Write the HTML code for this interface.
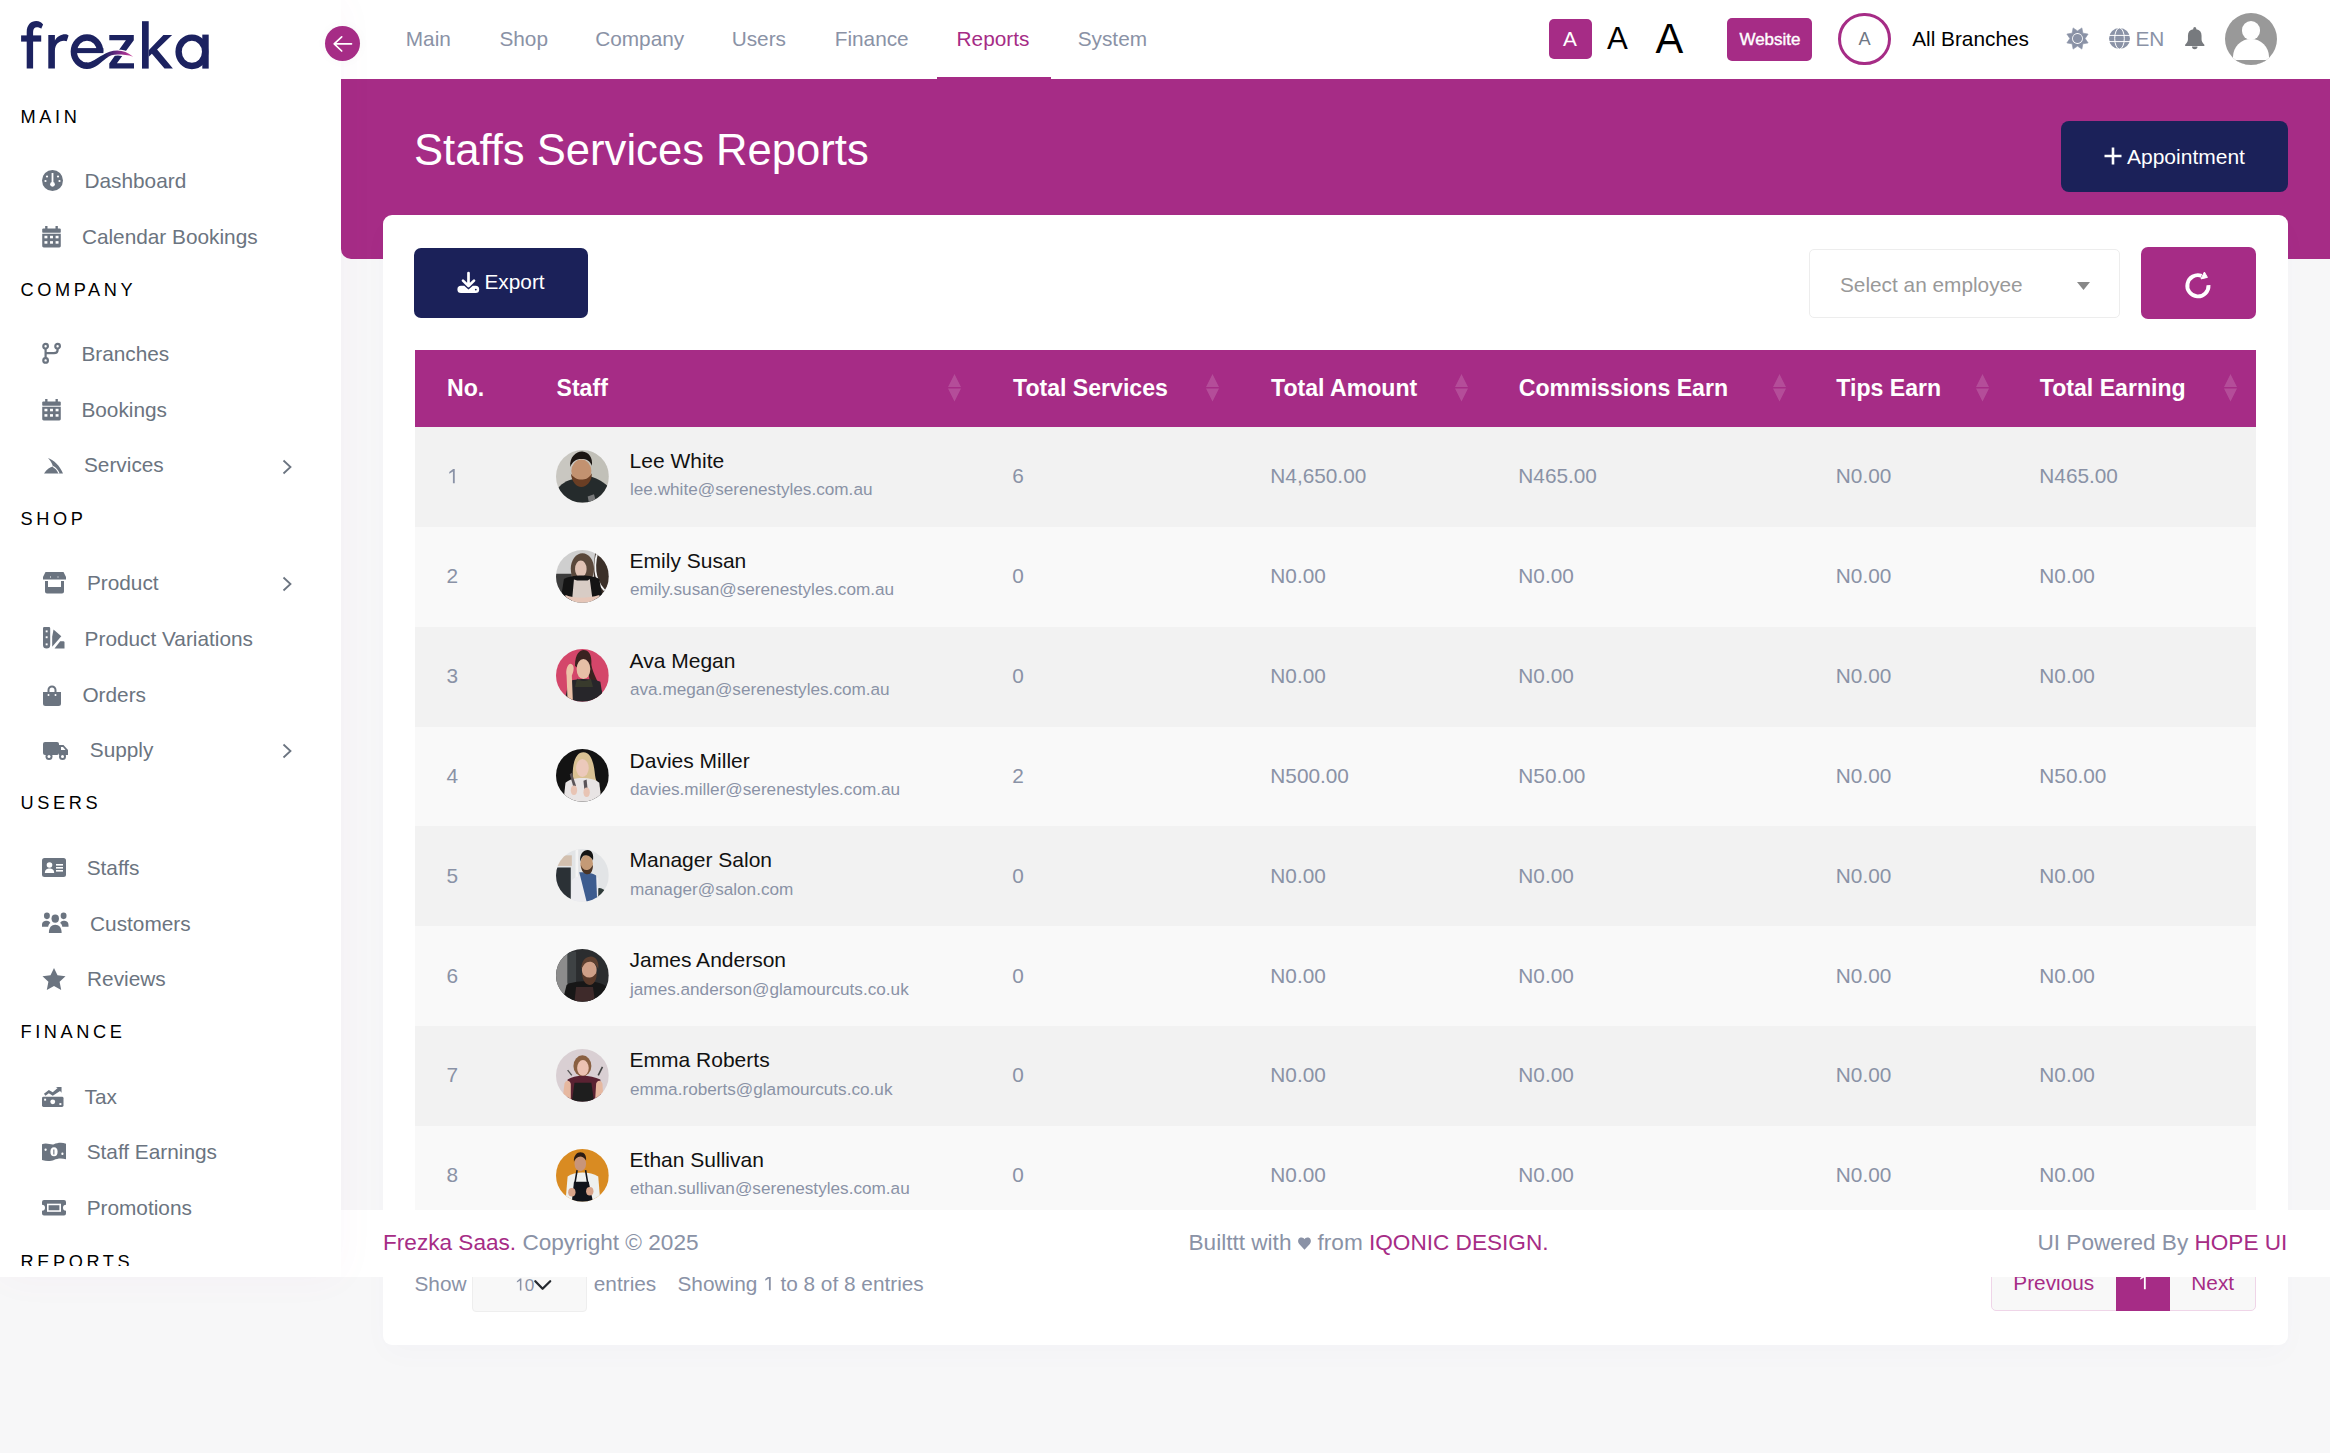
<!DOCTYPE html><html><head><meta charset="utf-8"><title>Staffs Services Reports</title><style>
*{box-sizing:border-box;margin:0;padding:0}
html,body{width:2330px;height:1453px;overflow:hidden}
body{background:#f7f7f8;font-family:"Liberation Sans",sans-serif;position:relative;color:#8a92a6}
.abs{position:absolute}
.t{position:absolute;white-space:nowrap;line-height:1}
svg{position:absolute;overflow:visible}
</style></head><body>
<div class="abs" style="left:341px;top:79px;width:1989px;height:179.6px;background:#a62c86;border-bottom-left-radius:10px"></div>
<div class="t " style="left:414.00px;top:128.99px;font-size:43.6px;color:#fff;">Staffs Services Reports</div>
<div class="abs" style="left:2061px;top:121px;width:227px;height:71px;background:#1b2159;border-radius:8px"></div>
<svg style="left:2104px;top:147px" width="18" height="18" viewBox="0 0 18 18"><path d="M9 0.5 V17.5 M0.5 9 H17.5" stroke="#fff" stroke-width="2.6"/></svg>
<div class="t " style="left:2127.00px;top:146.02px;font-size:21px;color:#fff;">Appointment</div>
<div class="abs" style="left:383px;top:215px;width:1905px;height:1130px;background:#fff;border-radius:9px;box-shadow:0 10px 30px rgba(17,38,146,0.02)"></div>
<div class="abs" style="left:414px;top:248px;width:174px;height:70px;background:#1b2159;border-radius:7px"></div>
<svg style="left:456.7px;top:271px" width="23" height="23" viewBox="0 0 23 23">
<path d="M0.4 18.4 a3.6 3.6 0 0 1 3.6 -3.6 H7.2 L11.5 18.6 L15.8 14.8 H18.6 a3.6 3.6 0 0 1 3.6 3.6 V18.5 a3.6 3.6 0 0 1 -3.6 3.6 H4 a3.6 3.6 0 0 1 -3.6 -3.6z" fill="#fff"/>
<path d="M11.5 2 V14.5 M6 9.6 L11.5 15 L17 9.6" stroke="#fff" stroke-width="2.7" fill="none" stroke-linecap="round" stroke-linejoin="round"/>
<circle cx="18.8" cy="18.6" r="0.9" fill="#1b2159"/>
</svg>
<div class="t " style="left:484.50px;top:272.39px;font-size:20.8px;color:#fff;">Export</div>
<div class="abs" style="left:1808.5px;top:248.5px;width:311px;height:69px;background:#fff;border:1.3px solid #ededed;border-radius:5px"></div>
<div class="t " style="left:1840.00px;top:275.09px;font-size:20.8px;color:#999;">Select an employee</div>
<svg style="left:2077px;top:282px" width="13" height="8" viewBox="0 0 13 8"><path d="M0 0 H13 L6.5 8z" fill="#888"/></svg>
<div class="abs" style="left:2141px;top:247px;width:115px;height:71.5px;background:#a62c86;border-radius:7px"></div>
<svg style="left:2184px;top:271px" width="28" height="28" viewBox="0 0 28 28">
<path d="M24.5 14.1 A10.6 10.6 0 1 1 17.5 4.8" stroke="#fff" stroke-width="3.9" fill="none"/>
<path d="M20.4 1 L23.4 6.4 L17 7.9 Z" fill="#fff" stroke="#fff" stroke-width="1" stroke-linejoin="round"/>
</svg>
<div class="abs" style="left:415px;top:350px;width:1840.5px;height:77px;background:#a62c86"></div>
<div class="t " style="left:447.00px;top:376.75px;font-size:23.1px;color:#fff;font-weight:bold;">No.</div>
<div class="t " style="left:556.50px;top:376.75px;font-size:23.1px;color:#fff;font-weight:bold;">Staff</div>
<svg style="left:948.0px;top:374px" width="13" height="28" viewBox="0 0 13 28"><path d="M6.5 0 L13 13 H0z M0 14.5 H13 L6.5 27.5z" fill="rgba(255,255,255,0.16)"/></svg>
<div class="t " style="left:1013.00px;top:376.75px;font-size:23.1px;color:#fff;font-weight:bold;">Total Services</div>
<svg style="left:1206.3px;top:374px" width="13" height="28" viewBox="0 0 13 28"><path d="M6.5 0 L13 13 H0z M0 14.5 H13 L6.5 27.5z" fill="rgba(255,255,255,0.16)"/></svg>
<div class="t " style="left:1271.00px;top:376.75px;font-size:23.1px;color:#fff;font-weight:bold;">Total Amount</div>
<svg style="left:1454.8px;top:374px" width="13" height="28" viewBox="0 0 13 28"><path d="M6.5 0 L13 13 H0z M0 14.5 H13 L6.5 27.5z" fill="rgba(255,255,255,0.16)"/></svg>
<div class="t " style="left:1518.80px;top:376.75px;font-size:23.1px;color:#fff;font-weight:bold;">Commissions Earn</div>
<svg style="left:1772.5px;top:374px" width="13" height="28" viewBox="0 0 13 28"><path d="M6.5 0 L13 13 H0z M0 14.5 H13 L6.5 27.5z" fill="rgba(255,255,255,0.16)"/></svg>
<div class="t " style="left:1836.30px;top:376.75px;font-size:23.1px;color:#fff;font-weight:bold;">Tips Earn</div>
<svg style="left:1975.5px;top:374px" width="13" height="28" viewBox="0 0 13 28"><path d="M6.5 0 L13 13 H0z M0 14.5 H13 L6.5 27.5z" fill="rgba(255,255,255,0.16)"/></svg>
<div class="t " style="left:2039.80px;top:376.75px;font-size:23.1px;color:#fff;font-weight:bold;">Total Earning</div>
<svg style="left:2223.5px;top:374px" width="13" height="28" viewBox="0 0 13 28"><path d="M6.5 0 L13 13 H0z M0 14.5 H13 L6.5 27.5z" fill="rgba(255,255,255,0.16)"/></svg>
<div class="abs" style="left:415px;top:427.00px;width:1840.5px;height:100.35px;background:#f2f2f2"></div>
<div class="t " style="left:446.50px;top:466.32px;font-size:20.8px;color:#8a92a6;"><svg style="position:static;display:inline;width:0.5561em;height:0.78125em;vertical-align:baseline;overflow:visible" viewBox="0 -1600 1139 1600"><path transform="scale(1,-1)" d="M583 0 V1160 L223 940 V1100 L600 1409 H763 V0 Z" fill="currentColor"/></svg></div>
<svg style="left:556.2px;top:449.73px" width="52.8" height="52.8" viewBox="0 0 100 100"><defs><clipPath id="cp0"><circle cx="50" cy="50" r="50"/></clipPath></defs><g clip-path="url(#cp0)"><rect width="100" height="100" fill="#c9c7c1"/><rect x="60" width="40" height="100" fill="#bdbab2" opacity="0.6"/><path d="M0 78 C8 64 22 57 34 55 L66 50 C80 54 92 62 100 70 V100 H0Z" fill="#252b2c"/><ellipse cx="48" cy="40" rx="19" ry="22" fill="#c39270"/><path d="M28 44 C30 62 40 70 48 70 C58 70 68 60 68 44 C62 54 56 56 48 56 C40 56 32 52 28 44Z" fill="#6a3e24"/><path d="M27 32 C25 12 40 2 50 3 C62 4 70 14 68 30 C64 20 58 17 48 17 C38 17 31 22 27 32Z" fill="#1b1512"/><path d="M60 88 L72 84 L75 95 L62 98Z" fill="#9a9a9a" opacity="0.7"/></g></svg>
<div class="t " style="left:629.60px;top:449.95px;font-size:21px;color:#111;">Lee White</div>
<div class="t " style="left:630.00px;top:481.40px;font-size:17.16px;color:#8a92a6;">lee.white@serenestyles.com.au</div>
<div class="t " style="left:1012.20px;top:466.32px;font-size:20.8px;color:#8a92a6;">6</div>
<div class="t " style="left:1270.30px;top:466.32px;font-size:20.8px;color:#8a92a6;">N4,650.00</div>
<div class="t " style="left:1518.30px;top:466.32px;font-size:20.8px;color:#8a92a6;">N465.00</div>
<div class="t " style="left:1835.80px;top:466.32px;font-size:20.8px;color:#8a92a6;">N0.00</div>
<div class="t " style="left:2039.30px;top:466.32px;font-size:20.8px;color:#8a92a6;">N465.00</div>
<div class="abs" style="left:415px;top:526.85px;width:1840.5px;height:100.35px;background:#f9f9f9"></div>
<div class="t " style="left:446.50px;top:566.17px;font-size:20.8px;color:#8a92a6;">2</div>
<svg style="left:556.2px;top:549.58px" width="52.8" height="52.8" viewBox="0 0 100 100"><defs><clipPath id="cp1"><circle cx="50" cy="50" r="50"/></clipPath></defs><g clip-path="url(#cp1)"><rect width="100" height="100" fill="#cfcfcf"/><rect x="0" y="45" width="30" height="55" fill="#3c3c3c"/><path d="M75 0 H100 V100 H80 C70 70 70 30 75 0Z" fill="#3b3029"/><path d="M78 5 C70 35 74 62 98 82" stroke="#f4f4f4" stroke-width="3.5" fill="none"/><ellipse cx="50" cy="36" rx="22" ry="30" fill="#5a483b"/><ellipse cx="47" cy="36" rx="11" ry="16" fill="#e0c2b4"/><path d="M8 100 L15 55 C28 46 70 46 82 55 L90 100Z" fill="#141414"/><path d="M30 100 L34 56 L40 58 H60 L64 55 L70 100Z" fill="#d8ccc5"/><path d="M18 85 C35 92 60 92 82 85 L84 100 H16Z" fill="#e6c6b8"/></g></svg>
<div class="t " style="left:629.60px;top:549.80px;font-size:21px;color:#111;">Emily Susan</div>
<div class="t " style="left:630.00px;top:581.25px;font-size:17.16px;color:#8a92a6;">emily.susan@serenestyles.com.au</div>
<div class="t " style="left:1012.20px;top:566.17px;font-size:20.8px;color:#8a92a6;">0</div>
<div class="t " style="left:1270.30px;top:566.17px;font-size:20.8px;color:#8a92a6;">N0.00</div>
<div class="t " style="left:1518.30px;top:566.17px;font-size:20.8px;color:#8a92a6;">N0.00</div>
<div class="t " style="left:1835.80px;top:566.17px;font-size:20.8px;color:#8a92a6;">N0.00</div>
<div class="t " style="left:2039.30px;top:566.17px;font-size:20.8px;color:#8a92a6;">N0.00</div>
<div class="abs" style="left:415px;top:626.70px;width:1840.5px;height:100.35px;background:#f2f2f2"></div>
<div class="t " style="left:446.50px;top:666.02px;font-size:20.8px;color:#8a92a6;">3</div>
<svg style="left:556.2px;top:649.43px" width="52.8" height="52.8" viewBox="0 0 100 100"><defs><clipPath id="cp2"><circle cx="50" cy="50" r="50"/></clipPath></defs><g clip-path="url(#cp2)"><rect width="100" height="100" fill="#d4466a"/><path d="M36 32 C36 8 46 2 52 2 C62 2 68 10 67 30 C70 48 80 60 90 90 L68 95 C66 70 64 60 62 50Z" fill="#3a2220"/><ellipse cx="52" cy="38" rx="13" ry="19" fill="#e6bfa6"/><path d="M16 100 L24 62 C36 55 68 55 84 62 L90 100Z" fill="#27262a"/><path d="M40 56 C45 62 60 62 66 56 L70 72 H36Z" fill="#383a2c"/><path d="M22 100 L20 50 C18 40 22 28 28 28 C36 30 34 42 30 50 L32 100Z" fill="#ecc2a8"/></g></svg>
<div class="t " style="left:629.60px;top:649.65px;font-size:21px;color:#111;">Ava Megan</div>
<div class="t " style="left:630.00px;top:681.10px;font-size:17.16px;color:#8a92a6;">ava.megan@serenestyles.com.au</div>
<div class="t " style="left:1012.20px;top:666.02px;font-size:20.8px;color:#8a92a6;">0</div>
<div class="t " style="left:1270.30px;top:666.02px;font-size:20.8px;color:#8a92a6;">N0.00</div>
<div class="t " style="left:1518.30px;top:666.02px;font-size:20.8px;color:#8a92a6;">N0.00</div>
<div class="t " style="left:1835.80px;top:666.02px;font-size:20.8px;color:#8a92a6;">N0.00</div>
<div class="t " style="left:2039.30px;top:666.02px;font-size:20.8px;color:#8a92a6;">N0.00</div>
<div class="abs" style="left:415px;top:726.55px;width:1840.5px;height:100.35px;background:#f9f9f9"></div>
<div class="t " style="left:446.50px;top:765.87px;font-size:20.8px;color:#8a92a6;">4</div>
<svg style="left:556.2px;top:749.27px" width="52.8" height="52.8" viewBox="0 0 100 100"><defs><clipPath id="cp3"><circle cx="50" cy="50" r="50"/></clipPath></defs><g clip-path="url(#cp3)"><rect width="100" height="100" fill="#131313"/><path d="M32 60 C30 30 36 6 52 6 C68 6 72 30 74 50 C76 65 84 70 84 82 L60 80 L40 75Z" fill="#d9c193"/><ellipse cx="50" cy="36" rx="12" ry="17" fill="#ecc9bb"/><path d="M14 100 L18 64 C30 52 70 52 82 64 L86 100Z" fill="#e8e4e4"/><path d="M26 48 L30 45 L38 70 L33 72Z" fill="#5a5458"/><path d="M52 60 L58 58 L60 78 L54 80Z" fill="#5a5458"/><ellipse cx="34" cy="78" rx="6" ry="9" fill="#e8c4b4"/><ellipse cx="58" cy="82" rx="6" ry="9" fill="#e8c4b4"/></g></svg>
<div class="t " style="left:629.60px;top:749.50px;font-size:21px;color:#111;">Davies Miller</div>
<div class="t " style="left:630.00px;top:780.95px;font-size:17.16px;color:#8a92a6;">davies.miller@serenestyles.com.au</div>
<div class="t " style="left:1012.20px;top:765.87px;font-size:20.8px;color:#8a92a6;">2</div>
<div class="t " style="left:1270.30px;top:765.87px;font-size:20.8px;color:#8a92a6;">N500.00</div>
<div class="t " style="left:1518.30px;top:765.87px;font-size:20.8px;color:#8a92a6;">N50.00</div>
<div class="t " style="left:1835.80px;top:765.87px;font-size:20.8px;color:#8a92a6;">N0.00</div>
<div class="t " style="left:2039.30px;top:765.87px;font-size:20.8px;color:#8a92a6;">N50.00</div>
<div class="abs" style="left:415px;top:826.40px;width:1840.5px;height:100.35px;background:#f2f2f2"></div>
<div class="t " style="left:446.50px;top:865.72px;font-size:20.8px;color:#8a92a6;">5</div>
<svg style="left:556.2px;top:849.12px" width="52.8" height="52.8" viewBox="0 0 100 100"><defs><clipPath id="cp4"><circle cx="50" cy="50" r="50"/></clipPath></defs><g clip-path="url(#cp4)"><rect width="100" height="100" fill="#e2e4e6"/><rect x="0" y="35" width="28" height="65" fill="#2b3136"/><rect x="37" y="0" width="5" height="100" fill="#f4f4f4"/><rect x="0" y="12" width="30" height="20" fill="#c9a98a" opacity="0.6"/><path d="M78 75 C85 72 92 76 95 85 L90 100 H76Z" fill="#2f3b3a"/><path d="M28 100 L30 60 C36 48 70 46 80 55 L80 100Z" fill="#ececf0"/><path d="M44 44 L58 100 H78 L76 50 C70 46 60 44 44 44Z" fill="#3d5c8f"/><ellipse cx="58" cy="28" rx="12" ry="17" fill="#c49a76"/><path d="M47 30 C48 44 54 48 60 48 C66 48 70 42 70 30 C66 38 62 40 58 40 C52 40 49 36 47 30Z" fill="#4a3426"/><path d="M46 24 C44 10 52 2 60 2 C68 2 72 10 70 22 C66 14 60 12 56 12 C50 12 48 18 46 24Z" fill="#151515"/></g></svg>
<div class="t " style="left:629.60px;top:849.35px;font-size:21px;color:#111;">Manager Salon</div>
<div class="t " style="left:630.00px;top:880.80px;font-size:17.16px;color:#8a92a6;">manager@salon.com</div>
<div class="t " style="left:1012.20px;top:865.72px;font-size:20.8px;color:#8a92a6;">0</div>
<div class="t " style="left:1270.30px;top:865.72px;font-size:20.8px;color:#8a92a6;">N0.00</div>
<div class="t " style="left:1518.30px;top:865.72px;font-size:20.8px;color:#8a92a6;">N0.00</div>
<div class="t " style="left:1835.80px;top:865.72px;font-size:20.8px;color:#8a92a6;">N0.00</div>
<div class="t " style="left:2039.30px;top:865.72px;font-size:20.8px;color:#8a92a6;">N0.00</div>
<div class="abs" style="left:415px;top:926.25px;width:1840.5px;height:100.35px;background:#f9f9f9"></div>
<div class="t " style="left:446.50px;top:965.57px;font-size:20.8px;color:#8a92a6;">6</div>
<svg style="left:556.2px;top:948.98px" width="52.8" height="52.8" viewBox="0 0 100 100"><defs><clipPath id="cp5"><circle cx="50" cy="50" r="50"/></clipPath></defs><g clip-path="url(#cp5)"><rect width="100" height="100" fill="#2b2d2f"/><rect x="0" y="0" width="22" height="100" fill="#8c8c8c"/><rect x="22" y="5" width="16" height="60" fill="#3e4244"/><path d="M12 100 L20 68 C35 58 85 58 96 72 L100 100Z" fill="#171717"/><path d="M35 100 L38 72 H70 L74 100Z" fill="#3e2a2a"/><ellipse cx="63" cy="40" rx="14" ry="18" fill="#cfa088"/><path d="M49 44 C50 62 58 68 64 68 C72 68 78 58 77 44 C72 52 68 54 63 54 C56 54 52 50 49 44Z" fill="#5a3a2a"/><path d="M48 38 C48 20 58 14 66 14 C76 14 82 24 80 38 C76 28 70 24 64 24 C56 24 52 30 48 38Z" fill="#5e4030"/></g></svg>
<div class="t " style="left:629.60px;top:949.20px;font-size:21px;color:#111;">James Anderson</div>
<div class="t " style="left:630.00px;top:980.65px;font-size:17.16px;color:#8a92a6;">james.anderson@glamourcuts.co.uk</div>
<div class="t " style="left:1012.20px;top:965.57px;font-size:20.8px;color:#8a92a6;">0</div>
<div class="t " style="left:1270.30px;top:965.57px;font-size:20.8px;color:#8a92a6;">N0.00</div>
<div class="t " style="left:1518.30px;top:965.57px;font-size:20.8px;color:#8a92a6;">N0.00</div>
<div class="t " style="left:1835.80px;top:965.57px;font-size:20.8px;color:#8a92a6;">N0.00</div>
<div class="t " style="left:2039.30px;top:965.57px;font-size:20.8px;color:#8a92a6;">N0.00</div>
<div class="abs" style="left:415px;top:1026.10px;width:1840.5px;height:100.35px;background:#f2f2f2"></div>
<div class="t " style="left:446.50px;top:1065.42px;font-size:20.8px;color:#8a92a6;">7</div>
<svg style="left:556.2px;top:1048.82px" width="52.8" height="52.8" viewBox="0 0 100 100"><defs><clipPath id="cp6"><circle cx="50" cy="50" r="50"/></clipPath></defs><g clip-path="url(#cp6)"><rect width="100" height="100" fill="#d9cfd3"/><ellipse cx="50" cy="32" rx="17" ry="20" fill="#8a6042"/><ellipse cx="51" cy="36" rx="11" ry="15" fill="#ecc2b2"/><path d="M20 100 L22 58 C35 48 65 48 84 58 L86 100Z" fill="#5a2232"/><path d="M30 100 L35 64 H67 L72 100Z" fill="#1e1e1e"/><path d="M12 100 L16 66 C18 58 26 58 28 66 L28 100Z" fill="#e6b8a0"/><path d="M74 100 L76 66 C78 58 86 58 88 66 L90 100Z" fill="#e6b8a0"/><path d="M22 40 L30 50" stroke="#555" stroke-width="2.5"/><path d="M88 34 L80 50" stroke="#444" stroke-width="3"/></g></svg>
<div class="t " style="left:629.60px;top:1049.05px;font-size:21px;color:#111;">Emma Roberts</div>
<div class="t " style="left:630.00px;top:1080.50px;font-size:17.16px;color:#8a92a6;">emma.roberts@glamourcuts.co.uk</div>
<div class="t " style="left:1012.20px;top:1065.42px;font-size:20.8px;color:#8a92a6;">0</div>
<div class="t " style="left:1270.30px;top:1065.42px;font-size:20.8px;color:#8a92a6;">N0.00</div>
<div class="t " style="left:1518.30px;top:1065.42px;font-size:20.8px;color:#8a92a6;">N0.00</div>
<div class="t " style="left:1835.80px;top:1065.42px;font-size:20.8px;color:#8a92a6;">N0.00</div>
<div class="t " style="left:2039.30px;top:1065.42px;font-size:20.8px;color:#8a92a6;">N0.00</div>
<div class="abs" style="left:415px;top:1125.95px;width:1840.5px;height:100.35px;background:#f9f9f9"></div>
<div class="t " style="left:446.50px;top:1165.27px;font-size:20.8px;color:#8a92a6;">8</div>
<svg style="left:556.2px;top:1148.67px" width="52.8" height="52.8" viewBox="0 0 100 100"><defs><clipPath id="cp7"><circle cx="50" cy="50" r="50"/></clipPath></defs><g clip-path="url(#cp7)"><rect width="100" height="100" fill="#d98b22"/><path d="M18 100 L22 52 C35 42 65 42 80 52 L84 100Z" fill="#eef0ee"/><path d="M30 100 L34 62 H62 L70 100Z" fill="#10131a"/><path d="M36 64 L40 40 M60 64 L56 40" stroke="#10131a" stroke-width="3"/><ellipse cx="46" cy="28" rx="11" ry="14" fill="#c8957a"/><path d="M34 24 C33 12 40 6 46 6 C54 6 58 12 57 22 C54 16 50 14 46 14 C40 14 37 18 34 24Z" fill="#2c1c15"/><ellipse cx="30" cy="82" rx="7" ry="8" fill="#d8a48a"/><ellipse cx="64" cy="80" rx="7" ry="8" fill="#d8a48a"/></g></svg>
<div class="t " style="left:629.60px;top:1148.90px;font-size:21px;color:#111;">Ethan Sullivan</div>
<div class="t " style="left:630.00px;top:1180.35px;font-size:17.16px;color:#8a92a6;">ethan.sullivan@serenestyles.com.au</div>
<div class="t " style="left:1012.20px;top:1165.27px;font-size:20.8px;color:#8a92a6;">0</div>
<div class="t " style="left:1270.30px;top:1165.27px;font-size:20.8px;color:#8a92a6;">N0.00</div>
<div class="t " style="left:1518.30px;top:1165.27px;font-size:20.8px;color:#8a92a6;">N0.00</div>
<div class="t " style="left:1835.80px;top:1165.27px;font-size:20.8px;color:#8a92a6;">N0.00</div>
<div class="t " style="left:2039.30px;top:1165.27px;font-size:20.8px;color:#8a92a6;">N0.00</div>
<div class="t " style="left:414.50px;top:1273.69px;font-size:20.8px;color:#8a92a6;">Show</div>
<div class="abs" style="left:472px;top:1250px;width:115px;height:62px;background:#f8f8f8;border:1px solid #eee;border-radius:4px"></div>
<div class="t " style="left:515.30px;top:1276.64px;font-size:17.2px;color:#8a92a6;"><svg style="position:static;display:inline;width:0.5561em;height:0.78125em;vertical-align:baseline;overflow:visible" viewBox="0 -1600 1139 1600"><path transform="scale(1,-1)" d="M583 0 V1160 L223 940 V1100 L600 1409 H763 V0 Z" fill="currentColor"/></svg>0</div>
<svg style="left:533.5px;top:1280.2px" width="17.5" height="11" viewBox="0 0 17.5 11"><path d="M1.3 1.3 L8.6 8.8 L16.2 1.3" stroke="#252a30" stroke-width="2.3" fill="none" stroke-linecap="round" stroke-linejoin="round"/></svg>
<div class="t " style="left:593.80px;top:1273.69px;font-size:20.8px;color:#8a92a6;">entries</div>
<div class="t " style="left:677.50px;top:1273.69px;font-size:20.8px;color:#8a92a6;">Showing <svg style="position:static;display:inline;width:0.5561em;height:0.78125em;vertical-align:baseline;overflow:visible" viewBox="0 -1600 1139 1600"><path transform="scale(1,-1)" d="M583 0 V1160 L223 940 V1100 L600 1409 H763 V0 Z" fill="currentColor"/></svg> to 8 of 8 entries</div>
<div class="abs" style="left:1991px;top:1250px;width:265px;height:60.5px;background:#f8f8f8;border:1.3px solid #efd5e8;border-radius:5px"></div>
<div class="abs" style="left:2115.5px;top:1250px;width:54px;height:61px;background:#a62c86"></div>
<div class="t " style="left:2013.30px;top:1272.59px;font-size:20.8px;color:#a62c86;">Previous</div>
<div class="t " style="left:2138.00px;top:1272.59px;font-size:20.8px;color:#fff;"><svg style="position:static;display:inline;width:0.5561em;height:0.78125em;vertical-align:baseline;overflow:visible" viewBox="0 -1600 1139 1600"><path transform="scale(1,-1)" d="M583 0 V1160 L223 940 V1100 L600 1409 H763 V0 Z" fill="currentColor"/></svg></div>
<div class="t " style="left:2191.30px;top:1272.59px;font-size:20.8px;color:#a62c86;">Next</div>
<div class="abs" style="left:341px;top:1209.5px;width:1989px;height:67.5px;background:#fff"></div>
<div class="t " style="left:383.00px;top:1232.27px;font-size:22.6px;color:#8a92a6;"><span style="color:#a62c86">Frezka Saas.</span> Copyright © 2025</div>
<div class="t " style="left:1188.50px;top:1232.27px;font-size:22.6px;color:#8a92a6;">Builttt with <span style="display:inline-block;width:13.5px"></span> from <span style="color:#a62c86">IQONIC DESIGN.</span></div>
<svg style="left:1297.9px;top:1237.3px" width="13" height="13" viewBox="0 0 13 13"><path d="M6.5 12.8 L1.2 7 C-0.6 5 -0.2 1.5 2.5 0.6 C4.3 0 5.8 0.9 6.5 2.2 C7.2 0.9 8.7 0 10.5 0.6 C13.2 1.5 13.6 5 11.8 7 Z" fill="#8a92a6"/></svg>
<div class="t " style="left:2037.50px;top:1232.27px;font-size:22.6px;color:#8a92a6;">UI Powered By <span style="color:#a62c86">HOPE UI</span></div>
<div class="abs" style="left:0;top:0;width:2330px;height:79px;background:#fff"></div>
<div class="t " style="left:405.80px;top:29.29px;font-size:20.8px;color:#8a92a6;">Main</div>
<div class="t " style="left:499.40px;top:29.29px;font-size:20.8px;color:#8a92a6;">Shop</div>
<div class="t " style="left:595.20px;top:29.29px;font-size:20.8px;color:#8a92a6;">Company</div>
<div class="t " style="left:731.70px;top:29.29px;font-size:20.8px;color:#8a92a6;">Users</div>
<div class="t " style="left:834.70px;top:29.29px;font-size:20.8px;color:#8a92a6;">Finance</div>
<div class="t " style="left:956.60px;top:29.29px;font-size:20.8px;color:#a62c86;">Reports</div>
<div class="t " style="left:1077.70px;top:29.29px;font-size:20.8px;color:#8a92a6;">System</div>
<div class="abs" style="left:937px;top:76.5px;width:114px;height:2.5px;background:#a62c86"></div>
<div class="abs" style="left:1549px;top:19px;width:42.5px;height:40px;background:#a62c86;border-radius:5px"></div>
<div class="t " style="left:1563.00px;top:28.79px;font-size:20.8px;color:#fff;">A</div>
<div class="t " style="left:1607.00px;top:23.39px;font-size:31.2px;color:#000;">A</div>
<div class="t " style="left:1655.50px;top:18.49px;font-size:41.6px;color:#000;">A</div>
<div class="abs" style="left:1727.3px;top:17.7px;width:85px;height:43px;background:#a62c86;border-radius:5px"></div>
<div class="t " style="left:1739.40px;top:30.91px;font-size:17px;color:#fff;-webkit-text-stroke:0.4px #fff;">Website</div>
<div class="abs" style="left:1838.2px;top:12.6px;width:52.6px;height:52.6px;border:3px solid #a62c86;border-radius:50%"></div>
<div class="t " style="left:1858.40px;top:29.89px;font-size:18.2px;color:#6f7785;">A</div>
<div class="t " style="left:1912.20px;top:28.59px;font-size:20.8px;color:#000;">All Branches</div>
<svg style="left:2066px;top:26.85px" width="23" height="23" viewBox="0 0 23 23">
<path d="M15.90 0.88 L16.87 6.13 L22.12 7.10 L19.10 11.50 L22.12 15.90 L16.87 16.87 L15.90 22.12 L11.50 19.10 L7.10 22.12 L6.13 16.87 L0.88 15.90 L3.90 11.50 L0.88 7.10 L6.13 6.13 L7.10 0.88 L11.50 3.90Z" fill="#8a92a6" stroke="#8a92a6" stroke-width="0.6" stroke-linejoin="round"/>
<circle cx="11.5" cy="11.5" r="5.4" fill="#fff"/><circle cx="11.5" cy="11.5" r="4.6" fill="#8a92a6"/>
</svg>
<svg style="left:2109.1px;top:27.85px" width="21" height="21" viewBox="0 0 21 21">
<circle cx="10.5" cy="10.5" r="10.5" fill="#8a92a6"/>
<g stroke="#fff" stroke-width="1" fill="none"><ellipse cx="10.5" cy="10.5" rx="4.8" ry="10.6"/><path d="M0 7.4 H21 M0 13.6 H21"/></g>
</svg>
<div class="t " style="left:2135.50px;top:28.59px;font-size:20.8px;color:#8a92a6;">EN</div>
<svg style="left:2185px;top:27.3px" width="19.5" height="22" viewBox="0 0 19.5 22">
<path d="M9.75 0 a1.5 1.5 0 0 1 1.5 1.5 v0.8 a6.5 6.5 0 0 1 5.3 6.4 v3.6 c0 2.2 1 3.6 2.6 5.1 a0.9 0.9 0 0 1 -0.6 1.6 h-17.6 a0.9 0.9 0 0 1 -0.6 -1.6 c1.6 -1.5 2.6 -2.9 2.6 -5.1 v-3.6 a6.5 6.5 0 0 1 5.3 -6.4 v-0.8 a1.5 1.5 0 0 1 1.5 -1.5z M7 19.5 h5.5 a2.75 2.75 0 0 1 -5.5 0z" fill="#777a7e"/>
</svg>
<div class="abs" style="left:2224.5px;top:12.7px;width:52.8px;height:52.8px;border-radius:50%;background:#999;overflow:hidden">
<div class="abs" style="left:17.3px;top:8.8px;width:18.4px;height:18.4px;border-radius:50%;background:#fff"></div>
<div class="abs" style="left:8.6px;top:26.6px;width:35.6px;height:32px;border-radius:17.8px 17.8px 0 0;background:#fff"></div>
<div class="abs" style="left:0;top:47.5px;width:53px;height:6px;background:#999"></div>
</div>
<div class="abs" style="left:0;top:0;width:341px;height:1277px;background:#fff;box-shadow:0 0 40px rgba(166,44,134,0.035)"></div>
<div class="abs" style="left:325.3px;top:25.9px;width:35.1px;height:35px;border-radius:50%;background:#a62c86;box-shadow:0 0 12px rgba(0,0,0,0.03)"></div>
<svg style="left:325px;top:26px" width="36" height="36" viewBox="325 26 36 36"><path d="M341.7 36.9 L334.2 43.8 L341.7 51 M334.6 43.8 H351.5" stroke="#fff" stroke-width="1.7" fill="none" stroke-linecap="round" stroke-linejoin="round"/></svg>
<svg style="left:0;top:0" width="230" height="90" viewBox="0 0 230 90">
<defs><linearGradient id="sw" gradientUnits="userSpaceOnUse" x1="95" y1="0" x2="134" y2="0"><stop offset="0" stop-color="#1c2260"/><stop offset="0.25" stop-color="#1c2260"/><stop offset="0.55" stop-color="#6a2a82"/><stop offset="0.8" stop-color="#a83291"/><stop offset="1" stop-color="#d65aa8"/></linearGradient></defs>
<g fill="#1c2260">
<path d="M26.7 68.4 V32 C26.7 25 31 21.1 36.2 21.1 C39.5 21.1 41.5 22.5 43.1 24.4 L41.2 28.8 C40 27.8 38.6 27.3 36.9 27.3 C34.5 27.3 33.1 29 33.1 32 V68.4 Z"/>
<rect x="21.1" y="35.4" width="20.1" height="6.2"/>
<path d="M48.3 35 H54.9 V40.4 C57 36.5 61 34.2 65.1 34.2 C66.5 34.2 67.6 34.7 68.6 35.4 L66.7 41.2 C66 41 65 40.8 64 40.8 C58.5 40.8 54.9 45 54.9 51 V68.4 H48.3 Z"/>
<path d="M109.3 35.1 H133.8 V40.3 L116.9 63.2 H134 V68.6 H109.3 V63.5 L125.9 40.3 H109.3 Z"/>
<rect x="142" y="21.2" width="6.7" height="47.4"/>
<path d="M148.7 50.3 L163.4 35.1 H172.1 L157.1 49.6 L172.9 68.6 H164.5 L151.9 53.7 L148.7 56.7 Z"/>
<rect x="202.3" y="34.6" width="6.4" height="34"/>
<rect x="77" y="48.1" width="26.4" height="5"/>
</g>
<g fill="none" stroke="#1c2260" stroke-width="6.4">
<path d="M100.15 51.6 A13.15 14.1 0 0 0 73.85 51.6 A13.15 14.1 0 0 0 87.5 65.8"/>
<ellipse cx="191.9" cy="51.8" rx="13.3" ry="14.2"/>
</g>
<path d="M106 56.5 C110 53 114 52.5 118 52.5 C123 52.5 127 54 131 56" stroke="#fff" stroke-width="6" fill="none"/>
<path d="M86 62.6 C92 62.6 97 58 102.4 55.2 C107 52.5 112 50.5 117.3 50.5 C123 50.5 128 52.5 133.2 56.8 C128 55 123 54.6 117.3 54.6 C113 54.6 110 55.5 106 58.5 C101 62 96 69 87 69 Z" fill="url(#sw)"/>
</svg>
<div class="t " style="left:20.50px;top:107.59px;font-size:18.2px;color:#000;letter-spacing:3.6px;">MAIN</div>
<div class="t " style="left:84.50px;top:170.99px;font-size:20.8px;color:#6b7480;">Dashboard</div>
<svg style="left:42px;top:170.00px" width="21" height="21" viewBox="0 0 21 21"><circle cx="10.5" cy="10.5" r="10.5" fill="#6b7480"/><g fill="#fff"><rect x="9.6" y="3" width="1.8" height="10"/><circle cx="10.5" cy="14.3" r="2.4"/><circle cx="5" cy="6.5" r="1.1"/><circle cx="16" cy="6.5" r="1.1"/><circle cx="3.5" cy="11" r="1.1"/><circle cx="17.5" cy="11" r="1.1"/></g></svg>
<div class="t " style="left:81.90px;top:226.99px;font-size:20.8px;color:#6b7480;">Calendar Bookings</div>
<svg style="left:42px;top:226.00px" width="19" height="21.5" viewBox="0 0 19 22"><g fill="#6b7480"><rect x="3" y="0" width="2.4" height="4"/><rect x="13.6" y="0" width="2.4" height="4"/><rect x="0" y="2.5" width="19" height="4.5" rx="1.2"/><path d="M0 8 H19 V20.5 a1.5 1.5 0 0 1 -1.5 1.5 H1.5 A1.5 1.5 0 0 1 0 20.5z"/></g><g fill="#fff"><rect x="2.3" y="10" width="3" height="2.6"/><rect x="8" y="10" width="3" height="2.6"/><rect x="13.7" y="10" width="3" height="2.6"/><rect x="2.3" y="15.5" width="3" height="2.6"/><rect x="8" y="15.5" width="3" height="2.6"/><rect x="13.7" y="15.5" width="3" height="2.6"/></g></svg>
<div class="t " style="left:20.50px;top:280.59px;font-size:18.2px;color:#000;letter-spacing:3.6px;">COMPANY</div>
<div class="t " style="left:81.40px;top:344.39px;font-size:20.8px;color:#6b7480;">Branches</div>
<svg style="left:42px;top:343.40px" width="19" height="21" viewBox="0 0 19 21"><g fill="none" stroke="#6b7480" stroke-width="2.2"><circle cx="3.6" cy="3.2" r="2.3"/><circle cx="15.6" cy="3.2" r="2.3"/><circle cx="3.6" cy="17.4" r="2.3"/><path d="M3.6 5.5 V15.1 M15.6 5.5 V7 C15.6 9 14 10.1 12 10.1 H3.6"/></g></svg>
<div class="t " style="left:81.40px;top:399.99px;font-size:20.8px;color:#6b7480;">Bookings</div>
<svg style="left:42px;top:399.00px" width="19" height="21.5" viewBox="0 0 19 22"><g fill="#6b7480"><rect x="3" y="0" width="2.4" height="4"/><rect x="13.6" y="0" width="2.4" height="4"/><rect x="0" y="2.5" width="19" height="4.5" rx="1.2"/><path d="M0 8 H19 V20.5 a1.5 1.5 0 0 1 -1.5 1.5 H1.5 A1.5 1.5 0 0 1 0 20.5z"/></g><g fill="#fff"><rect x="2.3" y="10" width="3" height="2.6"/><rect x="8" y="10" width="3" height="2.6"/><rect x="13.7" y="10" width="3" height="2.6"/><rect x="2.3" y="15.5" width="3" height="2.6"/><rect x="8" y="15.5" width="3" height="2.6"/><rect x="13.7" y="15.5" width="3" height="2.6"/></g></svg>
<div class="t " style="left:84.00px;top:455.39px;font-size:20.8px;color:#6b7480;">Services</div>
<svg style="left:43.5px;top:458.00px" width="19" height="16" viewBox="0 0 19 16"><path d="M4 0 C10 2 16 8 19 15.5 H0 C3 11 6 9 9 8.5 C8 5 6 2 4 0z" fill="#6b7480"/><path d="M9 8.5 C12 10 14 13 15 15.5" stroke="#fff" stroke-width="1.2" fill="none"/></svg>
<svg style="left:282px;top:458.50px" width="10" height="16" viewBox="0 0 10 16"><path d="M1.5 1.5 L8.5 8 L1.5 14.5" stroke="#6b7480" stroke-width="1.8" fill="none"/></svg>
<div class="t " style="left:20.50px;top:509.59px;font-size:18.2px;color:#000;letter-spacing:3.6px;">SHOP</div>
<div class="t " style="left:86.90px;top:573.09px;font-size:20.8px;color:#6b7480;">Product</div>
<svg style="left:42.5px;top:571.90px" width="23" height="21.5" viewBox="0 0 23 21.5"><g fill="#6b7480"><path d="M2.5 0 H20.5 L23 5 V7.5 H0 V5z"/><path d="M2 9 H5 V15 H18 V9 H21 V19.5 a2 2 0 0 1 -2 2 H4 a2 2 0 0 1 -2 -2z"/></g><g fill="#fff"><rect x="7" y="4.5" width="1" height="1"/><rect x="14.5" y="4.5" width="1" height="1"/></g></svg>
<svg style="left:282px;top:576.20px" width="10" height="16" viewBox="0 0 10 16"><path d="M1.5 1.5 L8.5 8 L1.5 14.5" stroke="#6b7480" stroke-width="1.8" fill="none"/></svg>
<div class="t " style="left:84.60px;top:628.99px;font-size:20.8px;color:#6b7480;">Product Variations</div>
<svg style="left:42.5px;top:627.10px" width="21.5" height="21.5" viewBox="0 0 21.5 21.5"><g fill="#6b7480"><path d="M0 1.2 a1.2 1.2 0 0 1 1.2 -1.2 H6 a1.2 1.2 0 0 1 1.2 1.2 V18 a3.6 3.6 0 0 1 -7.2 0z"/><path d="M10.5 2.6 L18.3 9.2 L9.2 19.8 V9.6z"/><path d="M11.5 21.5 L17.2 14.3 H20.3 a1.2 1.2 0 0 1 1.2 1.2 V21.5z"/></g><g fill="#fff"><rect x="2.7" y="3.4" width="1.9" height="1.9"/><rect x="2.7" y="9.3" width="1.9" height="1.9"/><rect x="2.7" y="16.4" width="1.9" height="1.9"/></g></svg>
<div class="t " style="left:82.40px;top:684.59px;font-size:20.8px;color:#6b7480;">Orders</div>
<svg style="left:42.5px;top:684.60px" width="18" height="21" viewBox="0 0 18 21"><path d="M5.5 7 V5 a3.5 3.5 0 0 1 7 0 V7" stroke="#6b7480" stroke-width="2" fill="none"/><path d="M0 7 H18 V18.5 a2.5 2.5 0 0 1 -2.5 2.5 H2.5 A2.5 2.5 0 0 1 0 18.5z" fill="#6b7480"/><circle cx="5.5" cy="10" r="1" fill="#fff"/><circle cx="12.5" cy="10" r="1" fill="#fff"/></svg>
<div class="t " style="left:89.80px;top:739.99px;font-size:20.8px;color:#6b7480;">Supply</div>
<svg style="left:42.5px;top:741.80px" width="26" height="18" viewBox="0 0 26 18"><g fill="#6b7480"><rect x="0" y="0" width="16" height="13" rx="2"/><path d="M16 3 H20.5 L25 8 V13 H16z"/><circle cx="6" cy="14.5" r="3.5"/><circle cx="19.5" cy="14.5" r="3.5"/></g><g fill="#fff"><circle cx="6" cy="14.5" r="1.5"/><circle cx="19.5" cy="14.5" r="1.5"/><path d="M18 5 H20 L22.5 8 H18z"/></g></svg>
<svg style="left:282px;top:743.10px" width="10" height="16" viewBox="0 0 10 16"><path d="M1.5 1.5 L8.5 8 L1.5 14.5" stroke="#6b7480" stroke-width="1.8" fill="none"/></svg>
<div class="t " style="left:20.50px;top:794.39px;font-size:18.2px;color:#000;letter-spacing:3.6px;">USERS</div>
<div class="t " style="left:86.70px;top:857.79px;font-size:20.8px;color:#6b7480;">Staffs</div>
<svg style="left:42px;top:858.20px" width="24" height="19" viewBox="0 0 24 19"><rect x="0" y="0" width="24" height="19" rx="2.5" fill="#6b7480"/><g fill="#fff"><circle cx="7.5" cy="7" r="2.8"/><path d="M2.8 15 C3 11.5 5 10.5 7.5 10.5 C10 10.5 12 11.5 12.2 15z"/><rect x="14" y="6" width="7" height="1.6"/><rect x="14" y="9" width="7" height="1.6"/><rect x="14" y="12" width="7" height="1.6"/></g></svg>
<div class="t " style="left:90.10px;top:913.59px;font-size:20.8px;color:#6b7480;">Customers</div>
<svg style="left:42px;top:911.90px" width="26.5" height="22" viewBox="0 0 27 20" preserveAspectRatio="none"><g fill="#6b7480"><circle cx="5" cy="3.5" r="3"/><circle cx="22" cy="3.5" r="3"/><circle cx="13.5" cy="6" r="3.8"/><path d="M0 12 C0 9 2 8 5 8 C7 8 8 9 8.5 10 C7 11 6.5 12 6.3 13.5 H0z"/><path d="M27 12 C27 9 25 8 22 8 C20 8 19 9 18.5 10 C20 11 20.5 12 20.7 13.5 H27z"/><path d="M7 19 C7 14 9.5 11.5 13.5 11.5 C17.5 11.5 20 14 20 19z"/></g></svg>
<div class="t " style="left:87.10px;top:969.39px;font-size:20.8px;color:#6b7480;">Reviews</div>
<svg style="left:42px;top:967.50px" width="24" height="23" viewBox="0 0 24 23"><path d="M12 0 L15.5 7.3 L23.5 8.3 L17.6 13.8 L19.2 22 L12 18 L4.8 22 L6.4 13.8 L0.5 8.3 L8.5 7.3z" fill="#6b7480"/></svg>
<div class="t " style="left:20.50px;top:1023.09px;font-size:18.2px;color:#000;letter-spacing:3.6px;">FINANCE</div>
<div class="t " style="left:84.60px;top:1087.19px;font-size:20.8px;color:#6b7480;">Tax</div>
<svg style="left:42px;top:1085.90px" width="21.5" height="21" viewBox="0 0 22 21.5" preserveAspectRatio="none"><g fill="#6b7480"><path d="M2 8 L7 4 L11 6.5 L16 2 L14 1 H20 V7 L18.5 5 L11 10 L7 7.5 L3.5 10z"/><rect x="0" y="11" width="22" height="10.5" rx="1.5"/></g><g fill="#fff"><circle cx="11" cy="16.2" r="2.5"/><rect x="2.2" y="13" width="2" height="2"/><rect x="17.8" y="17.5" width="2" height="2"/></g></svg>
<div class="t " style="left:86.70px;top:1142.39px;font-size:20.8px;color:#6b7480;">Staff Earnings</div>
<svg style="left:42px;top:1142.40px" width="24" height="19.5" viewBox="0 0 24 18" preserveAspectRatio="none"><path d="M0 2 C5 0 9 3 12 2 C15 1 19 0 24 1.5 V16 C19 14.5 15 15.5 12 16.5 C9 17.5 5 18 0 16.5z" fill="#6b7480"/><g fill="#fff"><ellipse cx="12" cy="9" rx="3.6" ry="4.2"/><rect x="2.5" y="6" width="2.2" height="2.2" rx="1"/><rect x="19.3" y="9.8" width="2.2" height="2.2" rx="1"/></g><path d="M11.3 7 H12.4 V11.5 H11.3z" fill="#6b7480"/></svg>
<div class="t " style="left:86.70px;top:1198.39px;font-size:20.8px;color:#6b7480;">Promotions</div>
<svg style="left:42px;top:1200.40px" width="24" height="15.5" viewBox="0 0 24 16" preserveAspectRatio="none"><path d="M2 0 H22 a2 2 0 0 1 2 2 V5 a3 3 0 0 0 0 6 V14 a2 2 0 0 1 -2 2 H2 a2 2 0 0 1 -2 -2 V11 a3 3 0 0 0 0 -6 V2 a2 2 0 0 1 2 -2z" fill="#6b7480"/><rect x="5" y="3.8" width="14" height="8.4" fill="#fff"/><rect x="6.6" y="5.4" width="10.8" height="5.2" fill="#6b7480"/></svg>
<div class="abs" style="left:0;top:1240px;width:341px;height:26px;overflow:hidden">
<div class="t" style="left:20.5px;top:12.89px;font-size:18.2px;color:#000;letter-spacing:3.6px">REPORTS</div>
</div>
</body></html>
